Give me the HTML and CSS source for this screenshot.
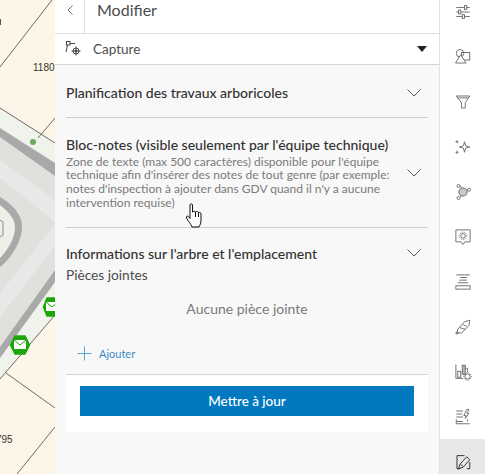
FILE: index.html
```html
<!DOCTYPE html>
<html lang="fr">
<head>
  <meta charset="UTF-8">
  <title>Modifier</title>
  <link rel="stylesheet" href="styles.css">
</head>
<body>
  <div class="app">
    <div class="map">
      <svg width="55" height="474" viewBox="0 0 55 474">
        <rect width="55" height="474" fill="#fdf5e7"/>
        <polygon points="0,108 55,143 55,315 0,379" fill="#f0f2ec"/>
        <polygon points="0,128 55,164 55,176 55,270 55,282 0,358 0,347" fill="#e0e0dc"/>
        <polygon points="0,128 55,163 55,176 0,137" fill="#a9a9a9"/>
        <polygon points="55,270 55,282 0,358 0,347" fill="#a9a9a9"/>
        <polygon points="0,160 55,200 55,222 0,178" fill="#e8e8e8"/>
        <polygon points="55,224 55,246 0,317 0,293" fill="#e8e8e8"/>
        <path d="M0 197 C12 204 22 214 22 227 C22 240 12 258 0 267 Z" fill="#a9a9a9"/>
        <path d="M0 205 C9 212 15 219 15 227 C15 238 8 250 0 258 Z" fill="#efefe9"/>
        <path d="M0 220 L3 222 L3 235 L0 237" fill="none" stroke="#8a8a8a"/>
        <g fill="none" stroke="#6c6c68" stroke-width="1">
          <path d="M0 67 L52 0"/>
          <path d="M0 108 L55 143"/>
          <path d="M38 138 L55 118"/>
          <path d="M0 379 L55 315"/>
          <path d="M6 373 L55 408"/>
          <path d="M17 474 L55 427"/>
        </g>
        <rect x="0" y="19" width="1" height="6" fill="#555"/>
        <text x="33" y="71" class="map-label">1180</text>
        <text x="-4" y="443" class="map-label">795</text>
        <circle cx="33" cy="142" r="3" fill="#6fa85a"/>
        <g>
          <polygon points="15,336 25,336 29.500,345 25,354 15,354 10.500,345" fill="#1ea50b" stroke="#1ea50b" stroke-width="1.500" stroke-linejoin="round"/>
          <rect x="14" y="340" width="12" height="9" fill="#fff"/>
          <path d="M14 340 L20 345 L26 340" fill="none" stroke="#1ea50b"/>
        </g>
        <g>
          <polygon points="47,298 57,298 61,307 57,316 47,316 43.500,307" fill="#1ea50b" stroke="#1ea50b" stroke-width="1.500" stroke-linejoin="round"/>
          <rect x="46" y="302" width="12" height="9" fill="#fff"/>
          <path d="M46 302 L52 307 L58 302" fill="none" stroke="#1ea50b"/>
        </g>
      </svg>
    </div>

    <div class="panel">
      <div class="panel-head">
        <div class="back">
          <svg width="8" height="12" viewBox="0 0 8 12"><path d="M6.5 1.5 L2 6 L6.5 10.5" fill="none" stroke="#6e6e6e"/></svg>
        </div>
        <div class="panel-title">Modifier</div>
      </div>
      <div class="capture">
        <svg width="18" height="17" viewBox="0 0 18 17" fill="none" stroke="#444">
          <rect x="1.500" y="0.500" width="3.500" height="3.500"/>
          <path d="M5 2.500 H10 M2.500 4 L1 11"/>
          <circle cx="11" cy="10" r="3"/>
          <circle cx="11" cy="10" r="1" fill="#444"/>
          <path d="M11 5.500 V14.500 M6.500 10 H15.500"/>
        </svg>
        <span class="capture-label">Capture</span>
        <span class="caret"></span>
      </div>

      <div class="form">
        <div class="group group-first">
          <div class="group-text">
            <div class="group-title">Planification des travaux arboricoles</div>
          </div>
          <svg class="chevron" width="14" height="8" viewBox="0 0 14 8"><path d="M0.500 0.500 L7 7 L13.500 0.500"/></svg>
        </div>
        <div class="group group-notes">
          <div class="group-text">
            <div class="group-title">Bloc-notes (visible seulement par l'équipe technique)</div>
            <div class="group-desc">Zone de texte (max 500 caractères) disponible pour l'équipe technique afin d'insérer des notes de tout genre (par exemple: notes d'inspection à ajouter dans GDV quand il n'y a aucune intervention requise)</div>
          </div>
          <svg class="chevron" width="14" height="8" viewBox="0 0 14 8"><path d="M0.500 0.500 L7 7 L13.500 0.500"/></svg>
        </div>
        <div class="group-open">
          <div class="group-open-head">
            <div class="group-title">Informations sur l'arbre et l'emplacement</div>
            <svg class="chevron" width="14" height="8" viewBox="0 0 14 8"><path d="M0.500 0.500 L7 7 L13.500 0.500"/></svg>
          </div>
          <div class="attach-label">Pièces jointes</div>
          <div class="attach-empty">Aucune pièce jointe</div>
          <div class="attach-add">
            <svg width="15" height="15" viewBox="0 0 15 15"><path d="M7.500 0.500 V14.500 M0.500 7.500 H14.500" stroke="#5ba6d6" fill="none"/></svg>
            <span>Ajouter</span>
          </div>
        </div>
        <div class="actions">
          <button class="update" type="button">Mettre à jour</button>
        </div>
      </div>
    </div>

    <div class="toolbar">
      <div class="tool">
        <svg viewBox="0 0 24 24"><path d="M3 6 H21 M3 12 H21 M3 18 H21"/><rect x="14" y="3.500" width="3" height="5" fill="#fff"/><rect x="6" y="9.500" width="3" height="5" fill="#fff"/><rect x="11" y="15.500" width="3" height="5" fill="#fff"/></svg>
      </div>
      <div class="tool">
        <svg viewBox="0 0 24 24"><circle cx="8" cy="7" r="5"/><rect x="10" y="6" width="11" height="10"/><path d="M9 9 L2 20 H16 Z" fill="#fff"/></svg>
      </div>
      <div class="tool">
        <svg viewBox="0 0 24 24"><path d="M3 4 H21 L15 13 V20 H10 V13 Z"/><path d="M5 6.500 H19"/></svg>
      </div>
      <div class="tool">
        <svg viewBox="0 0 24 24"><path d="M14 5 L15.500 10.500 L21 12 L15.500 13.500 L14 19 L12.500 13.500 L7 12 L12.500 10.500 Z"/><path d="M4 3 V7 M2 5 H6 M4 17 V21 M2 19 H6"/></svg>
      </div>
      <div class="tool">
        <svg viewBox="0 0 24 24"><circle cx="12" cy="12" r="5.500" fill="#c8c8c8"/><circle cx="6" cy="4" r="2"/><circle cx="6" cy="20" r="2"/><circle cx="20" cy="9" r="2"/><path d="M8 4.500 C10 5 10 5.500 10 7 M8 19 C9 18 9.500 18 10 17 M18 8.500 L17 9"/></svg>
      </div>
      <div class="tool">
        <svg viewBox="0 0 24 24"><path d="M2.500 2.500 H21.500 V18.500 H14.500 L12 22 L9.500 18.500 H2.500 Z"/><circle cx="12" cy="10.500" r="3"/><circle cx="12" cy="10.500" r="5" stroke-dasharray="1.500 1.500"/></svg>
      </div>
      <div class="tool">
        <svg viewBox="0 0 24 24"><path d="M3 2.500 H21 M8 6 H17 M7 9.500 H17 M5 13 H19"/><rect x="2.500" y="17" width="19" height="4.500" fill="#fff"/></svg>
      </div>
      <div class="tool">
        <svg viewBox="0 0 24 24"><path d="M5 15 L14 5 L21 3 L20 10 L10 20 H4 Z"/><path d="M8 13 L15 15 M12 9 L17 11"/><circle cx="4" cy="20" r="1.500"/></svg>
      </div>
      <div class="tool">
        <svg viewBox="0 0 24 24"><path d="M2.500 2 V20.500 H12"/><rect x="5" y="11" width="4" height="8"/><rect x="11" y="3" width="4" height="12" fill="#b5b5b5"/><path d="M15 7 H18 V12"/><circle cx="18" cy="18" r="3.500"/><circle cx="18" cy="18" r="5" stroke-dasharray="1.500 1.500"/></svg>
      </div>
      <div class="tool">
        <svg viewBox="0 0 24 24"><path d="M3 4 H12 M3 8 H11 M3 12 H12"/><path d="M3 15 V21 H21 M3 18 H12"/><path d="M17 2 L13 10 H16 L15 14 L20 7 H17 L20 2 Z"/><path d="M18 15 V18"/></svg>
      </div>
      <div class="tool tool-active">
        <svg viewBox="0 0 24 24"><path d="M14 3.500 H4 V21 H8 M21 12 V21 H17" stroke="#222"/><path d="M6 21 L8 15 L17 5 L21 9 L12 19 Z" stroke="#222" fill="#e8e8e8"/><path d="M9 15 L12 18" stroke="#222"/></svg>
      </div>
    </div>
  </div>

  <svg class="cursor" width="20" height="26" viewBox="0 0 20 26">
    <path d="M5 2 C5 0.500 7.500 0.500 7.500 2 V9 C8.500 8 10 8 10.500 9 C11.500 8 13 8.500 13.500 9.500 C14.500 9 16 9.500 16 11 V17 C16 20 15 22 14 24 H7 C6 21 3 18 1.500 15 C1 13 2.500 12.500 3.500 13.500 L5 15.500 Z" fill="#fff" stroke="#111" stroke-width="1"/>
    <path d="M10.500 9 V14 M13.500 9.500 V14" stroke="#111" fill="none"/>
  </svg>
</body>
</html>
```

FILE: styles.css
```css
html, body {
  margin: 0;
  padding: 0;
  height: 100%;
  overflow: hidden;
}
body {
  font-family: 'Lato', sans-serif;
  color: #323232;
  background: #fff;
}
.app {
  display: grid;
  grid-template-columns: 55px 384px 46px;
  height: 474px;
}
.map {
  overflow: hidden;
}
.map svg {
  display: block;
}
.map-label {
  font-family: 'Liberation Sans', sans-serif;
  font-size: 10px;
  fill: #333;
}
.panel {
  display: flex;
  flex-direction: column;
  background: #f8f8f8;
}
.panel-head {
  display: flex;
  height: 33px;
  background: #fff;
  border-bottom: 1px solid #e0e0e0;
}
.back {
  display: flex;
  justify-content: center;
  width: 30px;
  padding-top: 4px;
  box-sizing: border-box;
  border-right: 1px solid #e0e0e0;
}
.panel-title {
  padding-left: 12px;
  font-size: 16px;
  line-height: 19px;
  color: #4c4c4c;
}
.capture {
  display: flex;
  align-items: center;
  height: 30px;
  padding: 0 12px 0 10px;
  background: #fff;
  border-bottom: 1px solid #d4d4d4;
}
.capture-label {
  flex: 1;
  margin-left: 10px;
  font-size: 13.500px;
  color: #4c4c4c;
}
.caret {
  width: 0;
  height: 0;
  border-left: 5px solid transparent;
  border-right: 5px solid transparent;
  border-top: 6px solid #222;
}
.form {
  flex: 1;
  padding: 0 11px;
}
.group {
  display: flex;
  align-items: center;
  border-bottom: 1px solid #cfcfcf;
}
.group-first {
  height: 48px;
  padding-top: 4px;
}
.group-notes {
  height: 109px;
}
.group-text {
  flex: 1;
}
.group-title {
  font-size: 14px;
  font-weight: 500;
  line-height: 18px;
  color: #323232;
}
.group-desc {
  width: 330px;
  margin-top: 1px;
  font-size: 12px;
  line-height: 13.700px;
  color: #7a7a7a;
}
.chevron {
  margin-right: 7px;
  fill: none;
  stroke: #555;
}
.group-open {
  padding-top: 17px;
  height: 129px;
}
.group-open-head {
  display: flex;
  justify-content: space-between;
  height: 18px;
}
.group-open-head .chevron {
  margin-top: 4px;
}
.attach-label {
  margin-top: 3px;
  font-size: 13.700px;
  line-height: 17px;
  color: #4c4c4c;
}
.attach-empty {
  margin-top: 17px;
  font-size: 14px;
  line-height: 18px;
  text-align: center;
  color: #7a7a7a;
}
.attach-add {
  display: flex;
  align-items: center;
  gap: 7px;
  margin-top: 28px;
  padding-left: 11px;
  font-size: 11px;
  color: #3a8ac4;
}
.actions {
  height: 58px;
  padding: 11px 14px 0;
  box-sizing: border-box;
  background: #fff;
  border-top: 1px solid #d4d4d4;
}
.update {
  display: block;
  width: 100%;
  height: 30px;
  border: none;
  background: #0079c1;
  color: #fff;
  font-family: inherit;
  font-size: 13.500px;
  font-weight: 500;
}
.toolbar {
  display: flex;
  flex-direction: column;
  margin-top: -11px;
  background: #fff;
  border-left: 1px solid #e0e0e0;
}
.tool {
  display: flex;
  flex: none;
  align-items: center;
  justify-content: center;
  height: 45px;
}
.tool svg {
  width: 18px;
  height: 18px;
  fill: none;
  stroke: #666;
  stroke-width: 1.200;
}
.tool-active {
  background: #e8e8e8;
}
.cursor {
  position: absolute;
  left: 185px;
  top: 203px;
}
```
